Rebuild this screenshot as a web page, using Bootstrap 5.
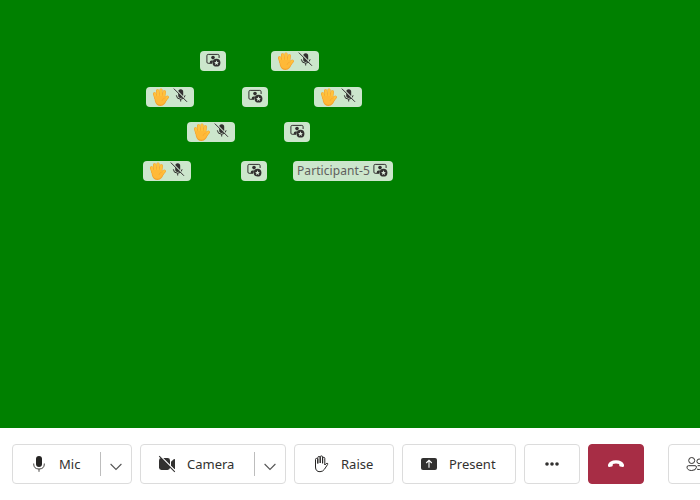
<!DOCTYPE html>
<html lang="en">
<head>
<meta charset="utf-8">
<meta name="viewport" content="width=device-width, initial-scale=1">
<title>Call</title>
<link href="https://cdn.jsdelivr.net/npm/bootstrap@5.3.0/dist/css/bootstrap.min.css" rel="stylesheet">
<style>
body{font-family:"Noto Sans","Open Sans",sans-serif;color:#323130}
.stage{background:#008000;height:428px}
.controls{height:72px;padding:0 12px}
.tag{height:20px;background:rgba(255,255,255,.8);border-radius:4px;font-size:12px;line-height:20px;color:#605e5c;left:var(--x);top:var(--y)}
.tag svg{display:block;flex:none}
.tag-pin{width:26px;padding-left:6px}
.tag-pin svg,.tag-name svg{margin-top:-2px}
.tag-muted{width:48px;padding-left:6px;gap:4px}
.tag-muted .i-muted{margin-top:-4px}
.tag-name{width:100px;padding-left:4px;gap:4px}
.tag-name span{width:72px;white-space:nowrap;letter-spacing:.08px}
.control{height:40px;border:1px solid #dcdcdc;border-radius:4px;background:#fff;font-size:13px;line-height:20px;color:#323130;padding:0;flex:none}
.control svg{display:block;flex:none}
.main-part{padding-left:16px;gap:10px}
.split{border-left:1px solid #bdbdbd;height:24px;width:31px;padding:6px 1px 0 0}
.w-mic{width:120px}.w-camera{width:146px}.w-raise{width:100px}.w-present{width:114px}.w-icon{width:56px}
.control.hangup{background:#a72d45;border-color:#a72d45;margin-right:16px}
.p1{--x:200px;--y:51px}.p2{--x:271px;--y:51px}.p3{--x:146px;--y:87px}.p4{--x:242px;--y:87px}.p5{--x:314px;--y:87px}
.p6{--x:187px;--y:122px}.p7{--x:284px;--y:122px}.p8{--x:143px;--y:161px}.p9{--x:241px;--y:161px}.p10{--x:293px;--y:161px}
</style>
</head>
<body class="overflow-hidden">
<svg width="0" height="0" class="position-absolute">
<defs>
<symbol id="pin" viewBox="0 0 15 14">
<path d="M6.2 10.3H2.2Q.9 10.3.9 9V2.7Q.9 1.4 2.2 1.4H11.8Q13.1 1.4 13.1 2.7V5" fill="none" stroke="#323130" stroke-width="1"/>
<circle cx="7" cy="4.6" r="1.8" fill="#323130"/><path d="M3.8 10V9Q3.8 7.4 5.4 7.4H7.2L6.3 10Z" fill="#323130"/>
<circle cx="10.5" cy="9.7" r="3.9" fill="#323130"/><path d="M10.5 7.2 11.2 8.9 13 9 11.6 10.1 12.1 11.9 10.5 10.9 8.9 11.9 9.4 10.1 8 9 9.8 8.9Z" fill="#dcebdc"/>
</symbol>
<symbol id="wave" viewBox="0 0 17 18">
<g fill="none" stroke="#f39d2b" stroke-linecap="round"><path d="M3.8 10 2.5 5.8M6.3 9 5.5 2.9M9 9V2M11.6 9.5 12.4 3.9" stroke-width="3.1"/><path d="M12.2 13 15.3 9.2" stroke-width="3.1"/></g>
<path d="M2.3 8H13L15 10.5Q13.4 18 8.5 18 4 18 2.9 13Z" fill="#f5a02a"/>
<g fill="none" stroke="#ffc23c" stroke-linecap="round"><path d="M4 10 2.7 5.7M6.4 9 5.7 2.8M9 9V1.9M11.5 9.5 12.3 3.8" stroke-width="2.4"/><path d="M12 13 15.3 9.1" stroke-width="2.3"/></g>
<path d="M2.9 8H12.7L14.2 11Q12.6 16.8 8.6 16.8 4.6 16.8 3.5 12.5Z" fill="#ffb938"/>
<path d="M12.8 10Q10.2 10.8 10 13" fill="none" stroke="#f7a62c" stroke-width=".7"/>
</symbol>
<symbol id="muted" viewBox="0 0 15 15">
<rect x="5.2" y="1.3" width="5" height="8.6" rx="2.5" fill="#323130"/>
<path d="M3.3 7.3Q3.6 11.2 7.7 11.2 11.8 11.2 12.1 7.3M7.7 11.2V13.5" fill="none" stroke="#323130" stroke-width="1"/>
<path d="M1.7.5 14.6 13.4" stroke="#d3e7d3" stroke-width="1.2"/><path d="M.8.6 14 13.8" stroke="#323130" stroke-width="1"/>
</symbol>
<symbol id="chev" viewBox="0 0 12 8"><path d="M.6 1 6 6.5 11.4 1" fill="none" stroke="#555" stroke-width="1.1"/></symbol>
</defs>
</svg>
<main class="stage position-relative">
<div class="tag tag-pin p1 position-absolute d-flex align-items-center"><svg width="15" height="14"><use href="#pin"/></svg></div>
<div class="tag tag-muted p2 position-absolute d-flex align-items-center"><svg width="17" height="18"><use href="#wave"/></svg><svg class="i-muted" width="15" height="15"><use href="#muted"/></svg></div>
<div class="tag tag-muted p3 position-absolute d-flex align-items-center"><svg width="17" height="18"><use href="#wave"/></svg><svg class="i-muted" width="15" height="15"><use href="#muted"/></svg></div>
<div class="tag tag-pin p4 position-absolute d-flex align-items-center"><svg width="15" height="14"><use href="#pin"/></svg></div>
<div class="tag tag-muted p5 position-absolute d-flex align-items-center"><svg width="17" height="18"><use href="#wave"/></svg><svg class="i-muted" width="15" height="15"><use href="#muted"/></svg></div>
<div class="tag tag-muted p6 position-absolute d-flex align-items-center"><svg width="17" height="18"><use href="#wave"/></svg><svg class="i-muted" width="15" height="15"><use href="#muted"/></svg></div>
<div class="tag tag-pin p7 position-absolute d-flex align-items-center"><svg width="15" height="14"><use href="#pin"/></svg></div>
<div class="tag tag-muted p8 position-absolute d-flex align-items-center"><svg width="17" height="18"><use href="#wave"/></svg><svg class="i-muted" width="15" height="15"><use href="#muted"/></svg></div>
<div class="tag tag-pin p9 position-absolute d-flex align-items-center"><svg width="15" height="14"><use href="#pin"/></svg></div>
<div class="tag tag-name p10 position-absolute d-flex align-items-center"><span>Participant-5</span><svg width="15" height="14"><use href="#pin"/></svg></div>
</main>
<footer class="controls d-flex align-items-center gap-2 bg-white overflow-hidden">
<div class="control w-mic d-flex align-items-center justify-content-between" role="button"><div class="main-part d-flex align-items-center">
<svg width="20" height="20" viewBox="0 0 20 20"><rect x="7" y="2" width="6" height="11" rx="3" fill="#252423"/><path d="M4.7 9.5V10Q4.7 15 10 15 15.3 15 15.3 10V9.5M10 15V17.8" fill="none" stroke="#484644" stroke-width="1"/></svg><span>Mic</span></div><div class="split d-flex align-items-center justify-content-center"><svg width="12" height="8"><use href="#chev"/></svg></div></div>
<div class="control w-camera d-flex align-items-center justify-content-between" role="button"><div class="main-part d-flex align-items-center">
<svg width="20" height="20" viewBox="0 0 20 20"><rect x="2" y="4" width="11" height="12" rx="2.4" fill="#323130"/><path d="M14 7.8 17 5.1Q18 4.5 18 5.6V14.4Q18 15.5 17 14.9L14 12.2Z" fill="#323130"/><path d="M3 1.8 18.8 17.6" stroke="#fff" stroke-width="1.5"/><path d="M2.2 2.2 17.8 17.8" stroke="#323130" stroke-width="1.1"/></svg><span>Camera</span></div><div class="split d-flex align-items-center justify-content-center"><svg width="12" height="8"><use href="#chev"/></svg></div></div>
<button class="control w-raise d-flex align-items-center" type="button"><span class="main-part d-flex align-items-center">
<svg width="20" height="20" viewBox="0 0 20 20"><path d="M4.5 11V5.4Q4.5 4.4 5.5 4.4T6.8 5.4V9.5 3.5Q6.9 2.5 8 2.5T9.2 3.5V9 2.9Q9.3 1.9 10.4 1.9T11.6 2.9V9.3 4.3Q11.7 3.3 12.7 3.3T13.8 4.3V11L15.2 9.6Q16.2 8.8 16.8 9.7 17 10.1 16.5 10.6L13.5 15.2Q11.8 17.7 9 17.7 4.5 17.7 4.5 13Z" fill="none" stroke="#252423" stroke-width="1" stroke-linejoin="round"/></svg><span>Raise</span></span></button>
<button class="control w-present d-flex align-items-center" type="button"><span class="main-part d-flex align-items-center">
<svg width="20" height="20" viewBox="0 0 20 20"><rect x="2" y="4" width="16" height="12" rx="2" fill="#323130"/><path d="M10 13.8V6.5M7.2 9 10 6.3 12.8 9" fill="none" stroke="#fff" stroke-width="1.1"/></svg><span>Present</span></span></button>
<button class="control w-icon d-flex align-items-center justify-content-center" type="button" aria-label="More"><svg width="20" height="20" viewBox="0 0 20 20" fill="#323130"><circle cx="5" cy="10" r="1.8"/><circle cx="10" cy="10" r="1.8"/><circle cx="15" cy="10" r="1.8"/></svg></button>
<button class="control hangup w-icon d-flex align-items-center justify-content-center" type="button" aria-label="Leave"><svg width="20" height="20" viewBox="0 0 20 20"><path d="M2 10.8Q3.5 6.3 10 6.3T18 10.8V12Q17.7 13.2 16.7 13L14.2 12.5Q13.4 12.3 13.3 11.4L13.1 10Q10 9 6.9 10L6.7 11.4Q6.6 12.3 5.8 12.5L3.3 13Q2.3 13.2 2 12Z" fill="#fff"/></svg></button>
<button class="control w-present d-flex align-items-center" type="button" aria-label="People"><span class="main-part d-flex align-items-center"><svg width="20" height="20" viewBox="0 0 20 20" fill="none" stroke="#323130" stroke-width="1"><circle cx="6.7" cy="6.5" r="3"/><circle cx="14.2" cy="7.3" r="2.3"/><path d="M3.5 11.7H10Q11.5 11.7 11.5 13.2 11 16.5 6.7 16.5 2.3 16.5 2 13.2 2 11.7 3.5 11.7ZM12.6 11.7H16.5Q18 11.7 18 13 17.5 15.5 14.2 15.5 12.8 15.5 12 15.1"/></svg></span></button>
</footer>
<script src="https://cdn.jsdelivr.net/npm/bootstrap@5.3.0/dist/js/bootstrap.bundle.min.js"></script>
</body>
</html>
